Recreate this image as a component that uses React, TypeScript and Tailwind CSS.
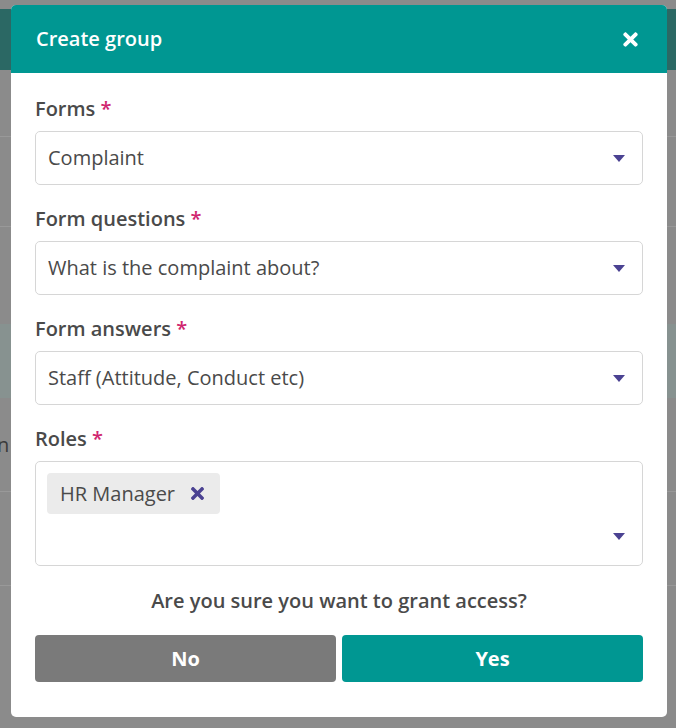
import { FaTimes } from 'react-icons/fa';

const FONT = { fontFamily: '"Open Sans", "Noto Sans", sans-serif' };

function Caret() {
  return (
    <svg width="12" height="7" viewBox="0 0 12 7" className="shrink-0">
      <polygon points="0,0 12,0 6,7" fill="#4b4292" />
    </svg>
  );
}

function Label({ text }: { text: string }) {
  return (
    <div className="mb-[10px] h-6 text-[20px] font-semibold leading-6 text-[#4a4a4a]">
      {text} <span className="text-[#d0266f]">*</span>
    </div>
  );
}

function SelectBox({ label, value }: { label: string; value: string }) {
  return (
    <div className="mb-[22px]">
      <Label text={label} />
      <div className="flex h-[54px] items-center justify-between rounded-[5px] border border-[#d6d6d6] pl-3 pr-[17px]">
        <span className="text-[20px] text-[#4a4a4a]">{value}</span>
        <Caret />
      </div>
    </div>
  );
}

export default function App() {
  return (
    <div className="relative h-[728px] w-full overflow-hidden bg-[#8b8b8b]" style={FONT}>
      {/* dimmed page behind the modal */}
      <div className="pt-[9px]">
        <div className="h-[61px] bg-[#2b6864]" />
        <div className="h-[67px] border-b border-[#999]" />
        <div className="h-[90px] border-b border-[#999]" />
        <div className="h-[97px]" />
        <div className="h-[74px] bg-[#879290]" />
        <div className="flex h-[94px] items-center border-b border-[#999] text-[20px] text-[#3a3a3a]">
          <span className="-ml-[3px]">n</span>
        </div>
        <div className="h-[94px] border-b border-[#999]" />
      </div>

      {/* modal */}
      <div className="absolute left-[11px] top-[5px] w-[656px] overflow-hidden rounded-[5px] bg-white">
        <div className="flex h-[68px] items-center justify-between bg-[#009792] pl-[25px] pr-[26px]">
          <span className="text-[20px] font-semibold text-white">Create group</span>
          <FaTimes size={21} color="#ffffff" />
        </div>

        <div className="px-6 pb-[35px] pt-[24px]">
          <SelectBox label="Forms" value="Complaint" />
          <SelectBox label="Form questions" value="What is the complaint about?" />
          <SelectBox label="Form answers" value="Staff (Attitude, Conduct etc)" />

          <div>
            <Label text="Roles" />
            <div className="flex h-[105px] flex-col justify-between rounded-[5px] border border-[#d6d6d6] pb-[25px] pl-[11px] pr-[17px] pt-[11px]">
              <div className="flex h-[41px] w-[173px] items-center justify-between rounded-[4px] bg-[#ebebeb] pl-[13px] pr-[13px]">
                <span className="text-[20px] text-[#4a4a4a]">HR Manager</span>
                <FaTimes size={19} color="#4b4292" />
              </div>
              <div className="flex justify-end">
                <Caret />
              </div>
            </div>
          </div>

          <div className="mt-[23px] h-6 text-center text-[20px] font-semibold leading-6 text-[#4a4a4a]">
            Are you sure you want to grant access?
          </div>

          <div className="mt-[22px] flex gap-[6px]">
            <button className="h-[47px] flex-1 rounded-[4px] bg-[#7a7a7a] text-[20px] font-bold text-white">
              No
            </button>
            <button className="h-[47px] flex-1 rounded-[4px] bg-[#009792] text-[20px] font-bold text-white">
              Yes
            </button>
          </div>
        </div>
      </div>
    </div>
  );
}
